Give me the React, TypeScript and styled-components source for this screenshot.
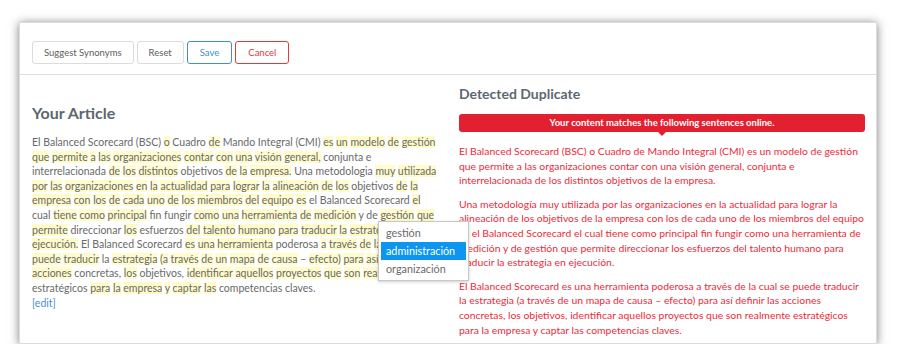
import { createGlobalStyle, styled } from "styled-components";

const GlobalStyle = createGlobalStyle`
  body {
    margin: 0;
    background: #ffffff;
    font-family: Lato, "Open Sans", sans-serif;
  }
`;

/** 바깥 여백 */
const Page = styled.div`
  padding: 22px 23px 0 19px;
`;

const Card = styled.div`
  width: 858px;
  height: 322px;
  box-sizing: border-box;
  background: #fff;
  border: 1px solid #dcdcdc;
  box-shadow: 0 1px 9px rgba(0, 0, 0, 0.5);
  overflow: hidden;
`;

const Toolbar = styled.div`
  display: flex;
  gap: 3px;
  padding: 18px 12px 10px;
  border-bottom: 1px solid #dedede;
`;

const Btn = styled.button<{ $tone?: "blue" | "red" }>`
  height: 23px;
  padding: 0 ${(p) => (p.$tone ? "12px" : "11px")};
  font-family: Lato, sans-serif;
  font-size: 9.5px;
  background: #fff;
  border-radius: 3px;
  border: 1px solid
    ${(p) =>
      p.$tone === "blue" ? "#3f8fd2" : p.$tone === "red" ? "#e4383f" : "#dcdcdc"};
  color: ${(p) =>
    p.$tone === "blue" ? "#3f8fd2" : p.$tone === "red" ? "#e4383f" : "#5d5d5d"};
`;

const Body = styled.div`
  position: relative;
  display: grid;
  grid-template-columns: 1fr 1fr;
  gap: 21px;
  padding: 0 11px 0 12px;
`;

const Column = styled.div<{ $top: number }>`
  padding-top: ${(p) => p.$top}px;
`;

const Heading = styled.h2<{ $size: number }>`
  margin: 0;
  font-size: ${(p) => p.$size}px;
  line-height: ${(p) => p.$size + 4}px;
  font-weight: 700;
  color: #5c6770;
`;

const Article = styled.p`
  margin: 12px 0 0;
  font-size: 10.5px;
  line-height: 14.6px;
  color: #6a6a6a;
`;

const Mark = styled.span`
  background: #fffbcb;
`;

const EditLink = styled.a`
  display: block;
  color: #4a8fd4;
  text-decoration: none;
`;

const Banner = styled.div`
  position: relative;
  margin-top: 11px;
  height: 18px;
  border-radius: 3px;
  background: #e3202f;
  color: #fff;
  font-size: 9.5px;
  font-weight: 700;
  line-height: 18px;
  text-align: center;
  &::after {
    content: "";
    position: absolute;
    left: 50%;
    bottom: -4px;
    margin-left: -4px;
    border-left: 4px solid transparent;
    border-right: 4px solid transparent;
    border-top: 4px solid #e3202f;
  }
`;

const Match = styled.p`
  margin: 12px 0 0;
  font-size: 10.4px;
  line-height: 14.6px;
  color: #ee2a3a;
  & + & {
    margin-top: 9px;
  }
`;

const Dropdown = styled.ul`
  position: absolute;
  left: 358px;
  top: 146px;
  width: 85px;
  margin: 0;
  padding: 2px;
  list-style: none;
  background: #fff;
  border: 1px solid #c8c8c8;
  box-shadow: 0 1px 3px rgba(0, 0, 0, 0.2);
`;

const Option = styled.li<{ $active?: boolean }>`
  padding: 0 5px;
  height: 18px;
  line-height: 18px;
  font-size: 10.8px;
  color: ${(p) => (p.$active ? "#fff" : "#6a6a6a")};
  background: ${(p) => (p.$active ? "#0d95f2" : "transparent")};
`;

/** * 로 시작하는 단어는 하이라이트 */
const article =
  "El Balanced Scorecard (BSC) *o Cuadro *de Mando Integral (CMI) *es *un *modelo *de *gestión " +
  "*que *permite *a *las *organizaciones *contar *con *una *visión *general, conjunta e " +
  "interrelacionada *de *los *distintos objetivos *de *la *empresa. Una metodologia *muy *utilizada " +
  "*por *las *organizaciones *en *la *actualidad *para *lograr *la *alineación *de *los objetivos *de *la " +
  "*empresa *con *los *de *cada *uno *de *los *miembros *del *equipo *es el Balanced Scorecard *el " +
  "cual *tiene *como *principal fin fungir *como *una *herramienta *de *medición y de *gestión *que " +
  "*permite direccionar *los esfuerzos *del *talento *humano *para *traducir *la *estrategia *en " +
  "*ejecución. El Balanced Scorecard *es *una *herramienta poderosa *a *través *de *la *cual *se " +
  "*puede *traducir la *estrategia *(a *través *de *un *mapa *de *causa – *efecto) *para *así *definir *las " +
  "*acciones concretas, *los objetivos, *identificar *aquellos *proyectos *que *son *realmente " +
  "estratégicos *para *la *empresa *y *captar *las competencias claves.";

const matches = [
  "El Balanced Scorecard (BSC) o Cuadro de Mando Integral (CMI) es un modelo de gestión que permite a las organizaciones contar con una visión general, conjunta e interrelacionada de los distintos objetivos de la empresa.",
  "Una metodología muy utilizada por las organizaciones en la actualidad para lograr la alineación de los objetivos de la empresa con los de cada uno de los miembros del equipo es el Balanced Scorecard el cual tiene como principal fin fungir como una herramienta de medición y de gestión que permite direccionar los esfuerzos del talento humano para traducir la estrategia en ejecución.",
  "El Balanced Scorecard es una herramienta poderosa a través de la cual se puede traducir la estrategia (a través de un mapa de causa – efecto) para así definir las acciones concretas, los objetivos, identificar aquellos proyectos que son realmente estratégicos para la empresa y captar las competencias claves.",
];

function App() {
  const words = article.split(" ");
  return (
    <Page>
      <GlobalStyle />
      <Card>
        <Toolbar>
          <Btn>Suggest Synonyms</Btn>
          <Btn>Reset</Btn>
          <Btn $tone="blue">Save</Btn>
          <Btn $tone="red">Cancel</Btn>
        </Toolbar>
        <Body>
          <Column $top={28}>
            <Heading $size={16}>Your Article</Heading>
            <Article>
              {words.map((w, i) => (
                <span key={i}>
                  {w.startsWith("*") ? <Mark>{w.slice(1)}</Mark> : w}
                  {i < words.length - 1 ? " " : ""}
                </span>
              ))}
              <EditLink href="#">[edit]</EditLink>
            </Article>
          </Column>
          <Column $top={10}>
            <Heading $size={14}>Detected Duplicate</Heading>
            <Banner>Your content matches the following sentences online.</Banner>
            {matches.map((m, i) => (
              <Match key={i}>{m}</Match>
            ))}
          </Column>
          <Dropdown>
            <Option>gestión</Option>
            <Option $active>administración</Option>
            <Option>organización</Option>
          </Dropdown>
        </Body>
      </Card>
    </Page>
  );
}

export default App;
